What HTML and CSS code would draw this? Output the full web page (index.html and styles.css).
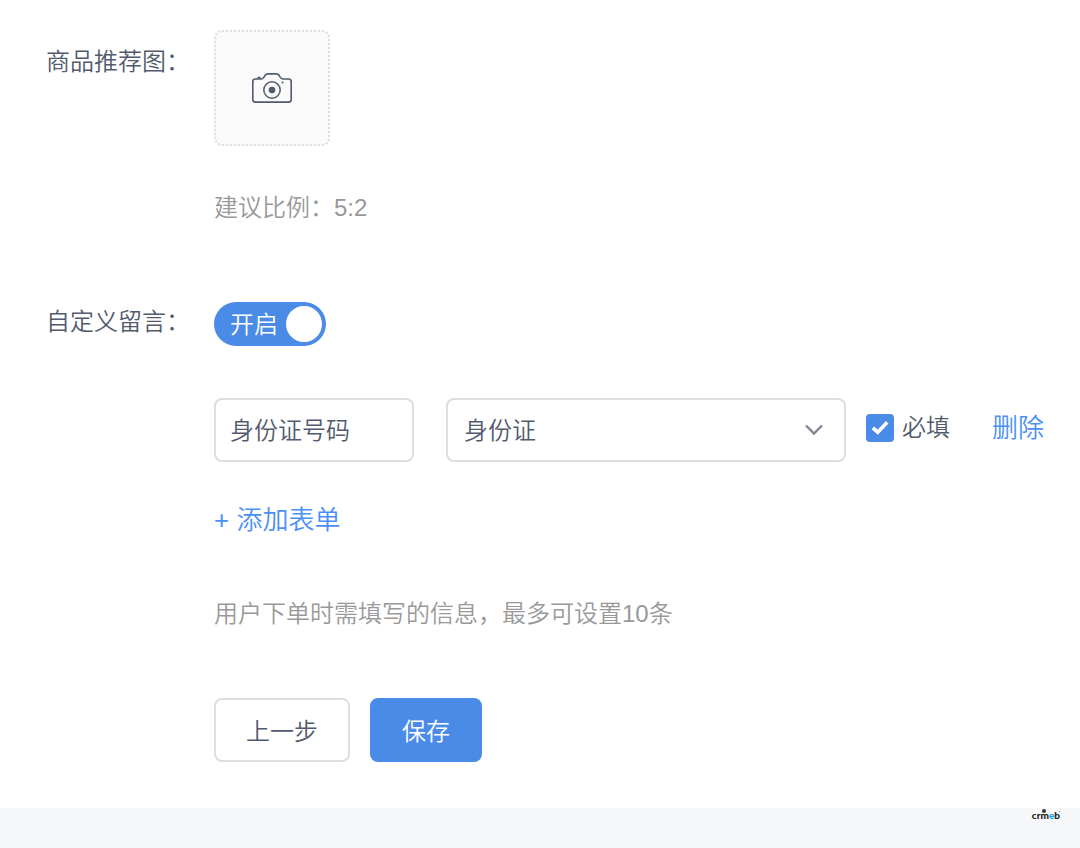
FILE: index.html
```html
<!DOCTYPE html>
<html lang="zh-CN">
<head>
<meta charset="utf-8">
<meta name="viewport" content="width=device-width, initial-scale=1">
<title>商品设置</title>
<link rel="stylesheet" href="styles.css">
</head>
<body>
<main class="card">
  <form class="form">
    <div class="item">
      <label class="item-label" for="upload">商品推荐图：</label>
      <div class="item-content">
        <button class="upload" id="upload" type="button" aria-label="上传图片">
          <svg class="camera" viewBox="0 0 40 30" fill="none" stroke="currentColor" aria-hidden="true">
            <path stroke-width="1.6" stroke-linejoin="round" d="M3.4 6H9c1.600 0 2.300-.8 3-1.900l1.200-1.800C14 1.200 14.600.9 15.800.9h8.600c1.200 0 1.800.3 2.600 1.400l1.200 1.800C29 5.200 29.600 6 31.200 6h5.400C38.300 6 39.200 6.900 39.200 8.600v17.900c0 1.700-.9 2.600-2.600 2.600H3.400C1.700 29.100.8 28.200.8 26.500V8.600C.8 6.900 1.700 6 3.400 6Z"/>
            <path fill="currentColor" stroke="none" d="M5 5.600c0-1.300.8-1.900 2-1.900s2 .6 2 1.900Z"/>
            <circle cx="20" cy="17" r="8.200" stroke-width="1.500"/>
            <circle cx="20" cy="17" r="3.300" fill="currentColor" stroke="none"/>
            <circle cx="30.500" cy="9.500" r="1" fill="currentColor" stroke="none"/>
          </svg>
        </button>
        <p class="hint hint-ratio">建议比例：5:2</p>
      </div>
    </div>

    <div class="item">
      <label class="item-label" for="message">自定义留言：</label>
      <div class="item-content">
        <div class="switch">
          <input class="switch-input" id="message" type="checkbox" role="switch" checked>
          <span class="switch-text">开启</span>
        </div>
        <div class="field-row">
          <input class="field field-name" type="text" value="身份证号码" aria-label="表单名称">
          <div class="select-wrap">
            <select class="field field-type" aria-label="表单类型">
              <option>身份证</option>
            </select>
            <svg class="chevron" viewBox="0 0 18 12" fill="none" stroke="currentColor" stroke-width="2.400" aria-hidden="true"><path d="M1 1.500 9 9.500l8-8"/></svg>
          </div>
          <label class="check">
            <span class="check-box">
              <input class="check-input" type="checkbox" checked>
              <svg class="check-mark" viewBox="0 0 28 28" fill="none" stroke="currentColor" stroke-width="3.600" aria-hidden="true"><path d="M6.800 13.800 11.800 18.200 21.200 8.200"/></svg>
            </span>
            必填
          </label>
          <a class="link link-delete" href="#">删除</a>
        </div>
        <a class="link link-add" href="#">+ 添加表单</a>
        <p class="hint hint-limit">用户下单时需填写的信息，最多可设置10条</p>
        <div class="actions">
          <button class="btn" type="button">上一步</button>
          <button class="btn btn-primary" type="submit">保存</button>
        </div>
      </div>
    </div>
  </form>
</main>
<footer class="footer">
  <div class="brand">cr<span class="brand-m">m</span><span class="brand-e">e</span><span class="brand-b">b</span></div>
</footer>
</body>
</html>
```

FILE: styles.css
```css
* {
  box-sizing: border-box;
}

body {
  margin: 0;
  min-height: 100vh;
  background: #f5f7f9;
  color: #515a6e;
  font-family: "Liberation Sans", "Noto Sans CJK SC", sans-serif;
  font-size: 24px;
  font-weight: 350;
  line-height: 32px;
}

.card {
  padding: 30px 36px 46px 46px;
  background: #fff;
}

.form {
  display: flex;
  flex-direction: column;
  gap: 66px;
}

.item {
  display: grid;
  grid-template-columns: 144px minmax(0, 1fr);
  column-gap: 24px;
}

.item-label {
  line-height: 64px;
}

.item-content {
  display: flex;
  flex-direction: column;
  align-items: flex-start;
}

.upload {
  display: flex;
  align-items: center;
  justify-content: center;
  width: 116px;
  height: 116px;
  padding: 0;
  border: 2px dotted #dddddd;
  border-radius: 8px;
  background: #fafafa;
  color: #515a6e;
}

.camera {
  width: 40px;
  height: 30px;
}

.hint {
  margin: 0;
  color: #999;
}

.hint-ratio {
  margin-top: 46px;
}

.switch {
  display: grid;
  align-items: center;
  margin-top: 12px;
}

.switch-input {
  grid-area: 1 / 1;
  display: flex;
  align-items: center;
  justify-content: flex-end;
  appearance: none;
  width: 112px;
  height: 44px;
  margin: 0;
  padding: 4px;
  border-radius: 22px;
  background: #4b8be8;
}

.switch-input::before {
  content: "";
  width: 36px;
  height: 36px;
  border-radius: 50%;
  background: #fff;
}

.switch-text {
  grid-area: 1 / 1;
  padding: 2px 0 0 16px;
  color: #fff;
  pointer-events: none;
}

.field-row {
  display: flex;
  align-items: center;
  align-self: stretch;
  margin-top: 52px;
}

.field {
  height: 64px;
  border: 2px solid #dcdee2;
  border-radius: 8px;
  background: #fff;
  color: inherit;
  font: inherit;
}

.field-name {
  width: 200px;
  margin-right: 32px;
  padding: 0 14px 4px;
}

.select-wrap {
  display: grid;
  flex: 1;
  align-items: center;
  min-width: 0;
}

.field-type {
  grid-area: 1 / 1;
  appearance: none;
  width: 100%;
  padding: 2px 16px 0;
}

.chevron {
  grid-area: 1 / 1;
  justify-self: end;
  width: 18px;
  height: 12px;
  margin-right: 23px;
  color: #808695;
  pointer-events: none;
}

.check {
  display: flex;
  align-items: center;
  gap: 8px;
  margin: 0 42px 4px 20px;
  white-space: nowrap;
}

.check-box {
  display: grid;
}

.check-input {
  grid-area: 1 / 1;
  appearance: none;
  width: 28px;
  height: 28px;
  margin: 0;
  border-radius: 4px;
  background: #4b8be8;
}

.check-mark {
  grid-area: 1 / 1;
  width: 28px;
  height: 28px;
  color: #fff;
  pointer-events: none;
}

.link {
  color: #4a90f7;
  font-size: 26px;
  text-decoration: none;
  white-space: nowrap;
}

.link-delete {
  margin-bottom: 4px;
}

.link-add {
  margin-top: 42px;
}

.hint-limit {
  margin-top: 62px;
}

.actions {
  display: flex;
  gap: 20px;
  margin-top: 68px;
}

.btn {
  height: 64px;
  padding: 4px 30px 0;
  border: 2px solid #dcdee2;
  border-radius: 8px;
  background: #fff;
  color: inherit;
  font: inherit;
}

.btn-primary {
  border-color: #4b8be8;
  background: #4b8be8;
  color: #fff;
}

.footer {
  display: flex;
  justify-content: flex-end;
  padding: 0 20px;
}

.brand {
  color: #1a1a1a;
  font-family: Lato, "Liberation Sans", sans-serif;
  font-size: 10px;
  font-weight: 900;
  line-height: 14px;
}

.brand-m,
.brand-b {
  position: relative;
}

.brand-m::before {
  content: "";
  position: absolute;
  top: 0;
  left: 2px;
  width: 4px;
  height: 4px;
  border-radius: 50%;
  background: #333;
}

.brand-b::after {
  content: "";
  position: absolute;
  top: 2px;
  right: 0;
  width: 1px;
  height: 1px;
  background: #999;
}

.brand-e {
  color: #0ea5ee;
}
```
